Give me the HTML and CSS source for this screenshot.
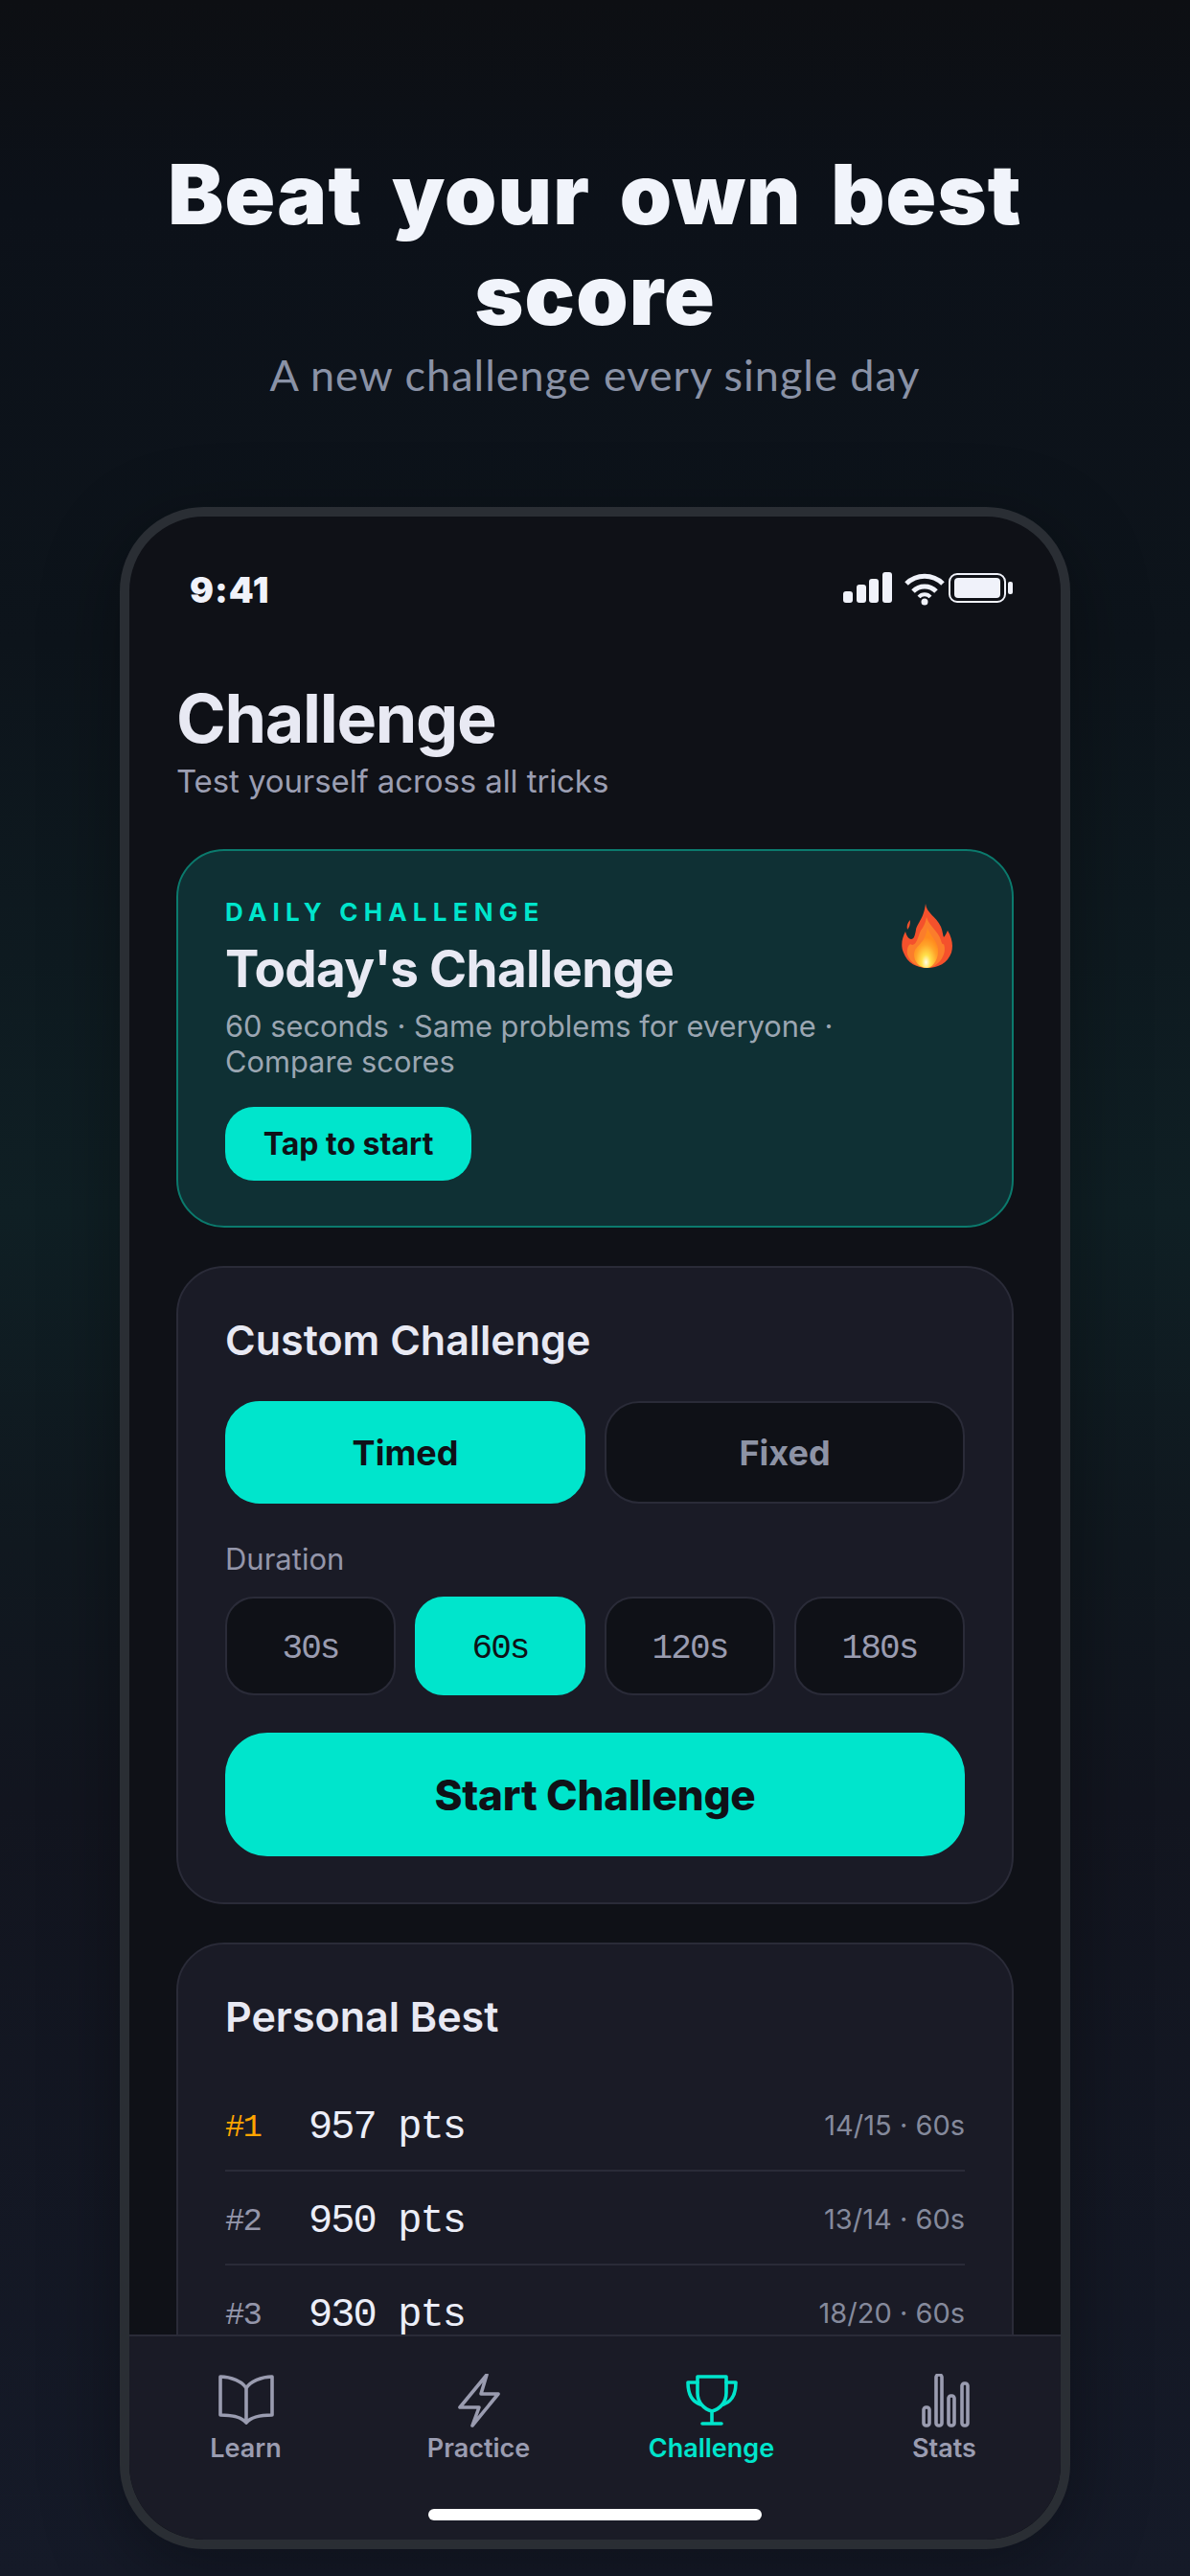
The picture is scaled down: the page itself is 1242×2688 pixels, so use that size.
FILE: index.html
```html
<!DOCTYPE html>
<html lang="en">
<head>
    <meta charset="UTF-8">
    <meta name="viewport" content="width=device-width, initial-scale=1.0">
    <title>Challenge</title>
    <link rel="stylesheet" href="styles.css">
</head>
<body>

    <header class="hero">
        <h1>Beat your own best score</h1>
        <p>A new challenge every single day</p>
    </header>

    <div class="phone">
        <div class="status-bar">
            <span class="time">9:41</span>
            <svg class="status-icons" width="178" height="36" viewBox="0 0 178 36">
                <rect x="0" y="21" width="10" height="12" rx="3" fill="#f0f2fa"/>
                <rect x="14" y="14" width="10" height="19" rx="3" fill="#f0f2fa"/>
                <rect x="27" y="8" width="10" height="25" rx="3" fill="#f0f2fa"/>
                <rect x="41" y="1" width="10" height="32" rx="3" fill="#f0f2fa"/>
                <path d="M66 13 A27 27 0 0 1 104 13" fill="none" stroke="#f0f2fa" stroke-width="5"/>
                <path d="M73 21 A17 17 0 0 1 97 21" fill="none" stroke="#f0f2fa" stroke-width="5"/>
                <path d="M79 27 A8 8 0 0 1 91 27" fill="none" stroke="#f0f2fa" stroke-width="4"/>
                <circle cx="85" cy="32" r="3.5" fill="#f0f2fa"/>
                <rect x="111" y="3" width="58" height="29" rx="8" fill="none" stroke="#f0f2fa" stroke-width="2"/>
                <rect x="116" y="7" width="48" height="21" rx="4" fill="#f0f2fa"/>
                <rect x="172" y="11" width="5" height="13" rx="2" fill="#f0f2fa"/>
            </svg>
        </div>

        <main class="content">
            <h2 class="page-title">Challenge</h2>
            <p class="page-sub">Test yourself across all tricks</p>

            <section class="daily-card">
                <div class="daily-text">
                    <div class="daily-label">DAILY CHALLENGE</div>
                    <h3 class="daily-title">Today's Challenge</h3>
                    <p class="daily-desc">60 seconds · Same problems for everyone · Compare scores</p>
                    <button class="tap-btn">Tap to start</button>
                </div>
                <svg class="flame" width="54" height="68" viewBox="0 0 54 68">
                    <defs>
                        <radialGradient id="flameGlow" cx="0.5" cy="0.86" r="0.62">
                            <stop offset="0" stop-color="#fffde8"/>
                            <stop offset="0.3" stop-color="#ffe04a"/>
                            <stop offset="0.7" stop-color="#ffa52a"/>
                            <stop offset="1" stop-color="#ff8a1e"/>
                        </radialGradient>
                    </defs>
                    <path d="M25 0 C26 10 36 13 41 24 C43 29 43 33 44 35 C46 33 47 30 48 28 C53 36 54 44 52 51 C48 62 38 67 27 67 C16 67 6 62 2 51 C-1 44 0 37 4 29 C5 33 7 37 10 37 C13 37 14 33 15 27 C17 19 23 16 25 0 Z" fill="#f4512c"/>
                    <path d="M5 8 C5 13 4 16 2 18 C1 14 2 11 5 8 Z" transform="translate(4 9)" fill="#f4512c"/>
                    <path d="M26 14 C29 24 38 28 41 38 C42 42 43 43 44 42 C46 47 45 54 40 60 C35 65 31 67 27 67 C18 67 9 62 6 53 C5 46 8 40 11 43 C16 43 17 34 20 28 C23 24 25 20 26 14 Z" fill="#fb7d2b"/>
                    <path d="M27 25 C29 33 37 38 38 47 C39 56 34 66 27 67 C18 67 13 60 13 53 C13 47 17 45 20 41 C24 37 26 31 27 25 Z" fill="url(#flameGlow)"/>
                </svg>
            </section>

            <section class="card">
                <h3 class="card-title">Custom Challenge</h3>
                <div class="mode-row">
                    <button class="mode-btn active">Timed</button>
                    <button class="mode-btn">Fixed</button>
                </div>
                <div class="field-label">Duration</div>
                <div class="duration-row">
                    <button class="dur-btn">30s</button>
                    <button class="dur-btn active">60s</button>
                    <button class="dur-btn">120s</button>
                    <button class="dur-btn">180s</button>
                </div>
                <button class="start-btn">Start Challenge</button>
            </section>

            <section class="card">
                <h3 class="card-title">Personal Best</h3>
                <ul class="best-list">
                    <li class="best-row">
                        <span class="rank gold">#1</span>
                        <span class="pts">957 pts</span>
                        <span class="meta">14/15 · 60s</span>
                    </li>
                    <li class="best-row">
                        <span class="rank">#2</span>
                        <span class="pts">950 pts</span>
                        <span class="meta">13/14 · 60s</span>
                    </li>
                    <li class="best-row">
                        <span class="rank">#3</span>
                        <span class="pts">930 pts</span>
                        <span class="meta">18/20 · 60s</span>
                    </li>
                </ul>
            </section>
        </main>

        <footer class="tab-area">
            <nav class="tabs">
                <a class="tab">
                    <svg class="tab-icon" width="60" height="56" viewBox="0 0 60 56">
                        <path d="M30 15 C26 8 14 3 3 3 V43 C14 43 25 45 30 51 C35 45 46 43 57 43 V3 C46 3 34 8 30 15 Z M30 15 V51"/>
                    </svg>
                    <span>Learn</span>
                </a>
                <a class="tab">
                    <svg class="tab-icon" width="60" height="56" viewBox="0 0 60 56">
                        <path d="M38 1 L10 35 H30 L23 54 L50 21 H32 Z"/>
                    </svg>
                    <span>Practice</span>
                </a>
                <a class="tab active">
                    <svg class="tab-icon" width="60" height="56" viewBox="0 0 60 56">
                        <path d="M15 3 H45 V20 C45 30 38 37 30 39 C22 37 15 30 15 20 Z"/>
                        <path d="M15 9 H5 C5 21 9 29 18 32 M45 9 H55 C55 21 51 29 42 32"/>
                        <path d="M30 39 V52 M20 52 H40"/>
                    </svg>
                    <span>Challenge</span>
                </a>
                <a class="tab">
                    <svg class="tab-icon" width="60" height="56" viewBox="0 0 60 56">
                        <rect x="8" y="35" width="6" height="19" rx="2.5"/>
                        <rect x="21" y="1" width="6" height="53" rx="2.5"/>
                        <rect x="34" y="23" width="6" height="31" rx="2.5"/>
                        <rect x="48" y="10" width="6" height="44" rx="2.5"/>
                    </svg>
                    <span>Stats</span>
                </a>
            </nav>
            <div class="home-bar"></div>
        </footer>
    </div>

</body>
</html>
```

FILE: styles.css
```css
* {
    box-sizing: border-box;
}
body {
    margin: 0;
    width: 1242px;
    height: 2688px;
    overflow: hidden;
    font-family: Inter, "Noto Sans", sans-serif;
    color: #e8e9f3;
    background: linear-gradient(180deg, #0d0f13 0%, #0c1119 8%, #0d141b 25%, #0f1f24 47%, #10181f 60%, #12151f 70%, #151a28 100%);
}
h1, h2, h3, p, ul {
    margin: 0;
    padding: 0;
}
button {
    font-family: inherit;
    border: 0;
    padding: 0;
}

/* hero text above the phone */
.hero {
    padding-top: 150px;
    height: 529px;
    text-align: center;
}
.hero h1 {
    width: 960px;
    margin: 0 auto;
    font-weight: 900;
    font-size: 87px;
    line-height: 105px;
    letter-spacing: 1.2px;
    word-spacing: 12px;
    color: #f1f4fb;
}
.hero p {
    margin-top: 4px;
    font-family: Lato, sans-serif;
    font-size: 45px;
    line-height: 54px;
    letter-spacing: 1px;
    color: #8a92a6;
}

/* phone frame */
.phone {
    display: flex;
    flex-direction: column;
    width: 992px;
    height: 2131px;
    margin: 0 auto;
    overflow: hidden;
    background: #0f1117;
    border: 10px solid #2a2e34;
    border-radius: 88px;
    box-shadow: 0 20px 80px rgba(0, 0, 0, 0.35);
}
.status-bar {
    display: flex;
    justify-content: space-between;
    align-items: center;
    flex-shrink: 0;
    height: 40px;
    margin-top: 55px;
    padding: 0 49px 0 63px;
}
.time {
    padding-top: 2px;
    font-weight: 900;
    font-size: 37px;
    letter-spacing: 1px;
    color: #f0f2fa;
}

.content {
    flex: 1;
    min-height: 0;
    overflow: hidden;
    padding: 76px 49px 0;
}
.page-title {
    font-size: 70px;
    line-height: 80px;
    font-weight: 700;
    letter-spacing: -1.3px;
}
.page-sub {
    margin-top: 3px;
    font-size: 33px;
    line-height: 44px;
    letter-spacing: -0.1px;
    color: #9b9eb2;
}

/* daily card */
.daily-card {
    display: flex;
    gap: 20px;
    height: 395px;
    margin-top: 49px;
    padding: 47px 61px 0 49px;
    background: #0f3034;
    border: 2px solid #0b7a6d;
    border-radius: 50px;
}
.daily-text {
    flex: 1;
}
.daily-label {
    font-size: 26px;
    line-height: 34px;
    font-weight: 700;
    letter-spacing: 6.2px;
    color: #00e5cc;
}
.daily-title {
    margin-top: 12px;
    font-size: 53px;
    line-height: 60px;
    font-weight: 700;
    letter-spacing: -0.7px;
}
.daily-desc {
    margin-top: 11px;
    font-size: 30.8px;
    line-height: 37px;
    color: #9ba6b2;
}
.tap-btn {
    display: block;
    width: 257px;
    height: 77px;
    margin-top: 29px;
    font-size: 32px;
    font-weight: 700;
    color: #0f1117;
    background: #00e5cc;
    border-radius: 30px;
}
.flame {
    flex-shrink: 0;
    margin-top: 8px;
}

/* custom + personal best cards */
.card {
    margin-top: 40px;
    padding: 48px 49px;
    background: #1a1b26;
    border: 2px solid #2a2b38;
    border-radius: 50px;
}
.card-title {
    font-size: 43px;
    line-height: 54px;
    font-weight: 600;
}
.mode-row {
    display: flex;
    gap: 20px;
    margin-top: 37px;
}
.mode-btn {
    flex: 1;
    height: 107px;
    font-size: 36px;
    font-weight: 700;
    color: #8d93a5;
    background: #0f1117;
    border: 2px solid #2a2b38;
    border-radius: 36px;
}
.mode-btn.active {
    color: #0f1117;
    background: #00e5cc;
    border-color: #00e5cc;
}
.field-label {
    margin-top: 38px;
    font-size: 31px;
    line-height: 40px;
    color: #9496aa;
}
.duration-row {
    display: flex;
    gap: 20px;
    margin-top: 19px;
}
.dur-btn {
    flex: 1;
    height: 103px;
    padding-top: 6px;
    font-family: "Liberation Mono", monospace;
    font-size: 36px;
    letter-spacing: -1.9px;
    color: #9a9cb0;
    background: #0f1117;
    border: 2px solid #2a2b38;
    border-radius: 30px;
}
.dur-btn.active {
    color: #0f1117;
    background: #00e5cc;
    border-color: #00e5cc;
}
.start-btn {
    display: block;
    width: 100%;
    height: 129px;
    margin-top: 39px;
    font-size: 44px;
    font-weight: 800;
    letter-spacing: -0.2px;
    color: #0f1117;
    background: #00e5cc;
    border-radius: 44px;
}
.best-list {
    margin-top: 37px;
    list-style: none;
}
.best-row {
    display: flex;
    align-items: center;
    height: 98px;
    padding-top: 3px;
    border-bottom: 2px solid #2a2b38;
}
.rank {
    width: 87px;
    padding-top: 4px;
    font-family: "Liberation Mono", monospace;
    font-size: 34px;
    letter-spacing: -1.9px;
    color: #9496aa;
}
.rank.gold {
    color: #ffa500;
}
.pts {
    flex: 1;
    padding-top: 4px;
    font-family: "Liberation Mono", monospace;
    font-size: 42px;
    letter-spacing: -1.9px;
    color: #eceef8;
}
.meta {
    font-size: 29px;
    color: #858a9c;
}

/* bottom tabs */
.tab-area {
    flex-shrink: 0;
    height: 214px;
    padding-top: 39px;
    background: #1a1b26;
    border-top: 2px solid #2a2b38;
}
.tabs {
    display: flex;
}
.tab {
    display: flex;
    flex: 1;
    flex-direction: column;
    align-items: center;
    font-size: 27px;
    line-height: 36px;
    font-weight: 600;
    color: #9a9cb0;
}
.tab span {
    margin-top: 4px;
}
.tab.active {
    color: #00e5cc;
}
.tab-icon {
    display: block;
    fill: none;
    stroke: currentColor;
    stroke-width: 3.6;
    stroke-linejoin: round;
    stroke-linecap: round;
}
.home-bar {
    width: 348px;
    height: 12px;
    margin: 45px auto 0;
    background: #fff;
    border-radius: 6px;
}
```
